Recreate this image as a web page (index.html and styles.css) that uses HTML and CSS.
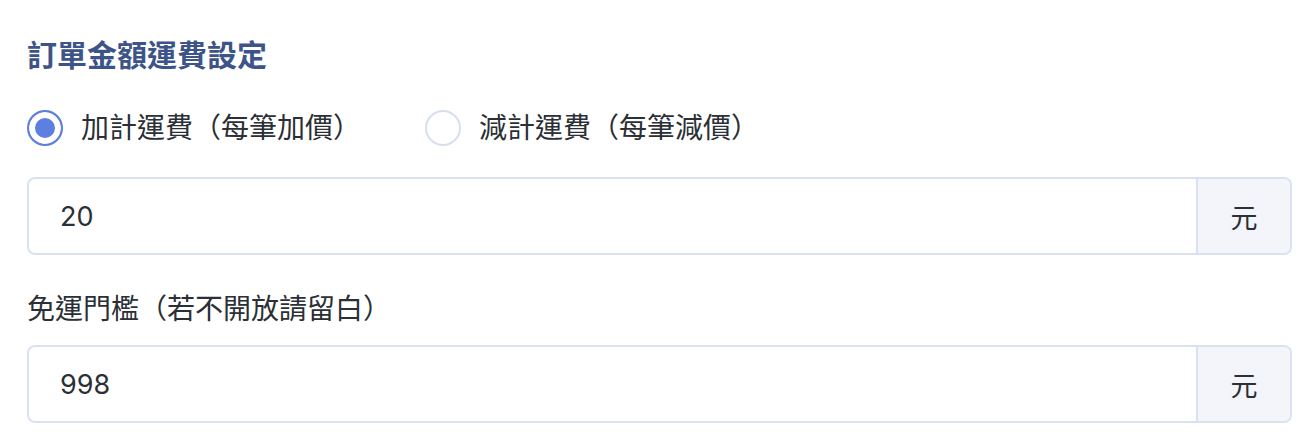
FILE: index.html
```html
<!DOCTYPE html>
<html lang="zh-Hant">
<head>
    <meta charset="UTF-8">
    <meta name="viewport" content="width=device-width, initial-scale=1.0">
    <title>訂單金額運費設定</title>
    <link rel="stylesheet" href="styles.css">
</head>
<body>

    <section class="shipping">

        <!-- Section title -->
        <h2 class="section-title">訂單金額運費設定</h2>

        <!-- Add / subtract mode -->
        <div class="radio-group">
            <label class="radio">
                <input type="radio" name="fee-mode" value="add" checked>
                <span>加計運費（每筆加價）</span>
            </label>
            <label class="radio">
                <input type="radio" name="fee-mode" value="minus">
                <span>減計運費（每筆減價）</span>
            </label>
        </div>

        <div class="input-group">
            <input class="input" type="text" id="fee" value="20">
            <span class="addon">元</span>
        </div>

        <!-- Free shipping threshold -->
        <label class="field-label" for="threshold">免運門檻（若不開放請留白）</label>
        <div class="input-group">
            <input class="input" type="text" id="threshold" value="998">
            <span class="addon">元</span>
        </div>

    </section>

</body>
</html>
```

FILE: styles.css
```css
body {
    margin: 0;
    padding: 0;
    background-color: #ffffff;
    font-family: Inter, "Noto Sans CJK TC", sans-serif;
    color: #2b2f36;
}

/* Main panel */
.shipping {
    display: flex;
    flex-direction: column;
    padding: 35px 24px 0 27px;
}

.section-title {
    margin: 0;
    font-size: 30px;
    line-height: 40px;
    font-weight: 700;
    color: #3c5488;
}

/* Radio options */
.radio-group {
    display: flex;
    gap: 64px;
    margin-top: 35px;
}

.radio {
    display: flex;
    align-items: center;
    gap: 18px;
    font-size: 28px;
    line-height: 36px;
    cursor: pointer;
}

.radio input {
    appearance: none;
    -webkit-appearance: none;
    margin: 0;
    width: 36px;
    height: 36px;
    border: 2px solid #d6def0;
    border-radius: 50%;
    background-color: #ffffff;
    cursor: pointer;
}

.radio input:checked {
    border-color: #5d7fdf;
    background-color: #5d7fdf;
    box-shadow: inset 0 0 0 6px #ffffff;
}

/* Input with unit addon */
.input-group {
    display: flex;
    height: 78px;
    box-sizing: border-box;
    border: 2px solid #dae1f1;
    border-radius: 8px;
    overflow: hidden;
    margin-top: 31px;
}

.input {
    flex: 1;
    border: none;
    outline: none;
    padding: 0 31px;
    font-family: inherit;
    font-size: 27px;
    color: #2b2f36;
    background: transparent;
}

.addon {
    display: flex;
    align-items: center;
    justify-content: center;
    width: 92px;
    border-left: 2px solid #dae1f1;
    background-color: #f3f5fa;
    font-size: 27px;
}

.field-label {
    margin-top: 34px;
    font-size: 28px;
    line-height: 40px;
}

.field-label + .input-group {
    margin-top: 16px;
}
```
